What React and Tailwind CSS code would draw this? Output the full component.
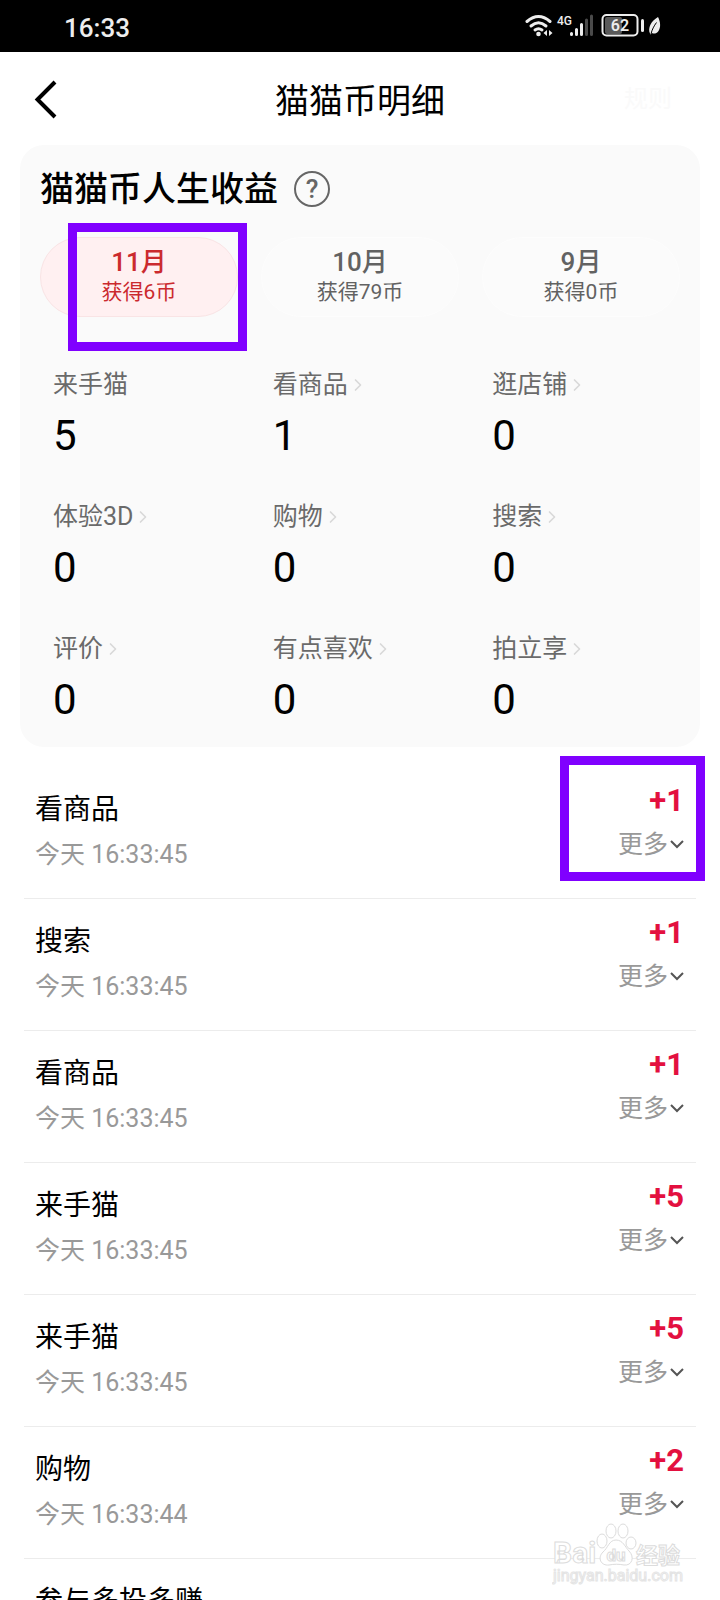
import { ChevronRight } from "lucide-react";

const months = [
  { label: "11月", earned: "获得6币", active: true },
  { label: "10月", earned: "获得79币" },
  { label: "9月", earned: "获得0币" },
];

const stats = [
  { label: "来手猫", value: 5, plain: true },
  { label: "看商品", value: 1 },
  { label: "逛店铺", value: 0 },
  { label: "体验3D", value: 0 },
  { label: "购物", value: 0 },
  { label: "搜索", value: 0 },
  { label: "评价", value: 0 },
  { label: "有点喜欢", value: 0 },
  { label: "拍立享", value: 0 },
];

const records = [
  { title: "看商品", time: "今天 16:33:45", amount: "+1", marked: true },
  { title: "搜索", time: "今天 16:33:45", amount: "+1" },
  { title: "看商品", time: "今天 16:33:45", amount: "+1" },
  { title: "来手猫", time: "今天 16:33:45", amount: "+5" },
  { title: "来手猫", time: "今天 16:33:45", amount: "+5" },
  { title: "购物", time: "今天 16:33:44", amount: "+2" },
  { title: "参与多投多赚" },
];

const StatusIcons = () => (
  <svg width="138" height="26" viewBox="0 0 138 26" fill="none" aria-hidden="true">
    {/* wifi */}
    <g stroke="#ededed" strokeWidth="3" strokeLinecap="round">
      <path d="M2 8.5 Q13.5 -1.5 25 8.5" />
      <path d="M6 13 Q13.5 6.5 21 13" />
      <path d="M10 17 Q13.5 14.5 17 17" />
    </g>
    <circle cx="13.5" cy="21" r="2.3" fill="#ededed" />
    <path d="M22 17 V23 L18.5 20 Z M24 17 V23 L27.5 20 Z" fill="#ededed" />
    {/* signal */}
    <text x="32" y="12" fill="#ededed" fontSize="12" fontWeight="500">4G</text>
    <g strokeWidth="3" strokeLinecap="round">
      <path d="M46.5 20.5 V21.5 M51.5 16.5 V21.5 M56.5 11.5 V21.5" stroke="#ededed" />
      <path d="M61.5 7 V21.5 M66.5 3 V21.5" stroke="#4a4a4a" />
    </g>
    {/* battery */}
    <rect x="80" y="4" width="17" height="17" rx="2" fill="#5a5a5a" />
    <rect x="77.5" y="2" width="35" height="20.5" rx="4" stroke="#ededed" strokeWidth="2" />
    <text x="95" y="18" textAnchor="middle" fill="#ededed" fontSize="16" fontWeight="600">62</text>
    <path d="M117.5 7.5 V17.5" stroke="#ededed" strokeWidth="3" strokeLinecap="round" />
    {/* power saving leaf */}
    <path d="M133 4 C135.5 9 136 14 133.5 18 C131.5 21 128.5 21 127 20 L125.5 21.5 L125 20.5 C122.5 15 126 8 133 4 Z" fill="#ededed" />
    <path d="M131.5 9.5 C129 13 127 16.5 126 21" stroke="#000" strokeWidth="1" />
  </svg>
);

const Watermark = () => (
  <svg width="132" height="64" viewBox="0 0 132 64" fill="#fff" stroke="#dcdcdc" aria-hidden="true">
    <text x="1" y="41" fontSize="30" fontWeight="700">Bai</text>
    <text x="84" y="41" fontSize="22" fontWeight="700">经验</text>
    <ellipse cx="50" cy="19" rx="5" ry="7" />
    <ellipse cx="59" cy="9" rx="5" ry="7" />
    <ellipse cx="71" cy="9" rx="5" ry="7" />
    <ellipse cx="79" cy="21" rx="5" ry="6" />
    <path d="M64 18 C71 18 73 25 77 29 C83 35 80 44 72 43 C67 42 62 42 57 43 C49 44 45 36 51 30 C56 26 57 18 64 18 Z" />
    <text x="64" y="39" textAnchor="middle" fontSize="17" fontWeight="700">du</text>
    <text x="1" y="59" fontSize="16" stroke="#e4e4e4">jingyan.baidu.com</text>
  </svg>
);

const MonthTab = ({ month }) => (
  <button
    type="button"
    className={
      month.active
        ? "relative h-20 rounded-full border border-[#f9e4e5] bg-[#fff0f1] text-[#cb2a2e]"
        : "h-20 rounded-full border border-[#fdfdfd] bg-[#fbfbfb] text-[#626262]"
    }
  >
    <span className="block text-[26px] leading-[30px] font-medium">{month.label}</span>
    <span className="block text-[21px] leading-[30px]">{month.earned}</span>
    {month.active && (
      <span className="absolute -top-[15px] left-[27px] h-32 w-[179px] border-9 border-[#8000ff]" />
    )}
  </button>
);

const Stat = ({ stat }) => (
  <div>
    <dt className="flex items-center text-[25px] leading-8 text-[#6a6a6a]">
      {stat.label}
      {!stat.plain && <ChevronRight size={20} strokeWidth={2} className="text-[#d8d8d8]" />}
    </dt>
    <dd className="mt-2 text-[42px] leading-[54px] text-black">{stat.value}</dd>
  </div>
);

const RecordRow = ({ record }) => (
  <li className="relative flex justify-between border-b border-[#ececec] pr-3 pb-[25px] pl-[11px]">
    <div className="pt-6">
      <p className="text-[28px] leading-[38px] text-black">{record.title}</p>
      {record.time && <p className="mt-2 text-[25px] leading-9 text-[#999]">{record.time}</p>}
    </div>
    {record.amount && (
      <div className="flex flex-col items-end gap-2 pt-4">
        <p className="text-[31px] leading-9 font-bold text-[#e3103f]">{record.amount}</p>
        <button type="button" className="flex items-center gap-0.5 text-[25px] leading-9 text-[#999]">
          更多
          <svg width="14" height="10" viewBox="0 0 14 10" fill="none" stroke="#555" strokeWidth="2">
            <path d="M1 1 L7 7 L13 1" />
          </svg>
        </button>
      </div>
    )}
    {record.marked && (
      <span className="absolute -top-[11px] -right-[9px] h-[125px] w-[145px] border-9 border-[#8000ff]" />
    )}
  </li>
);

const App = () => (
  <div className="relative flex h-screen flex-col overflow-hidden bg-white font-[Roboto,'Noto_Sans_CJK_SC',sans-serif]">
    <div className="flex h-13 shrink-0 items-center justify-between bg-black pr-[57px] pl-16 text-[#ededed]">
      <span className="pt-1 text-[26px] leading-8 font-medium">16:33</span>
      <StatusIcons />
    </div>

    <header className="grid h-[93px] shrink-0 grid-cols-[1fr_auto_1fr] items-center px-6">
      <button type="button" aria-label="返回" className="justify-self-start text-black">
        <svg width="40" height="44" viewBox="0 0 40 44" fill="none" stroke="currentColor" strokeWidth="4">
          <path d="M31 5 L13.5 22.5 L31 40" />
        </svg>
      </button>
      <h1 className="pt-1 text-[34px] leading-12 text-black">猫猫币明细</h1>
      <a href="#rules" className="mr-6 justify-self-end text-2xl text-[#fafafa]">规则</a>
    </header>

    <section className="mx-5 shrink-0 rounded-3xl bg-[#fafafa] p-5">
      <div className="flex items-center gap-4">
        <h2 className="text-[34px] leading-12 font-medium text-black">猫猫币人生收益</h2>
        <button
          type="button"
          aria-label="说明"
          className="flex size-9 items-center justify-center rounded-full border-2 border-[#666] text-[26px] leading-8 font-medium text-[#666]"
        >
          ?
        </button>
      </div>
      <div className="mt-6 grid grid-cols-3 gap-[23px]">
        {months.map((month) => (
          <MonthTab key={month.label} month={month} />
        ))}
      </div>
      <dl className="mt-13 grid grid-cols-3 gap-x-8 gap-y-[38px] pl-[13px]">
        {stats.map((stat) => (
          <Stat key={stat.label} stat={stat} />
        ))}
      </dl>
    </section>

    <ul className="mx-6 mt-5 shrink-0">
      {records.map((record, idx) => (
        <RecordRow key={idx} record={record} />
      ))}
    </ul>

    <div className="absolute right-9 bottom-3.5">
      <Watermark />
    </div>
  </div>
);

export default App;
